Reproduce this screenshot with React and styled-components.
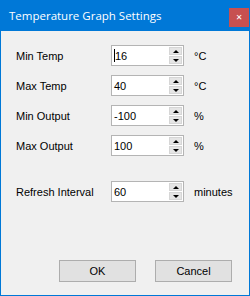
import React from "react";
import styled, { createGlobalStyle } from "styled-components";

const Global = createGlobalStyle`
	html, body {
		margin: 0;
		padding: 0;
		background: #f0f0f0;
	}
`;

const Window = styled.div`
	width: 250px;
	height: 296px;
	box-sizing: border-box;
	background: #f0f0f0;
	border: 1px solid #0078d7;
	border-top: none;
	display: flex;
	flex-direction: column;
	font-family: "Liberation Sans", Arial, sans-serif;
	font-size: 11px;
	color: #000;
`;

const TitleBar = styled.div`
	height: 31px;
	margin: 0 -1px;
	background: #0078d7;
	display: flex;
	align-items: center;
	justify-content: space-between;
	padding-left: 9px;
	padding-right: 1px;
	color: #fff;
	font-family: "Open Sans", "Noto Sans", sans-serif;
	font-size: 11.5px;
`;

const Close = styled.div`
	width: 20px;
	height: 19px;
	margin-top: 4px;
	background: #c75050;
	display: flex;
	align-items: center;
	justify-content: center;
	color: #fff;
	font-family: "DejaVu Sans", sans-serif;
	font-size: 8px;
	font-weight: bold;
`;

const Body = styled.div`
	flex: 1;
	padding: 14px 0 0 15px;
	display: flex;
	flex-direction: column;
`;

const Rows = styled.div`
	display: grid;
	grid-template-columns: 85px 73px auto;
	column-gap: 10px;
	row-gap: 9px;
	align-items: center;
	margin-top: ${(p) => p.$top || "0px"};
`;

const Label = styled.span`
	white-space: nowrap;
`;

const Spin = styled.div`
	height: 21px;
	box-sizing: border-box;
	border: 1px solid #b4b4b4;
	background: #fff;
	display: flex;
`;

const Value = styled.div`
	flex: 1;
	padding-left: 2px;
	display: flex;
	align-items: center;
`;

const Caret = styled.span`
	display: inline-block;
	width: 1px;
	height: 13px;
	background: #000;
`;

const Arrows = styled.div`
	width: 15px;
	display: flex;
	flex-direction: column;
	gap: 1px;
	padding: 1px;
	box-sizing: border-box;
	background: #fff;
`;

const Arrow = styled.div`
	flex: 1;
	background: #e5e5e5;
	border: 1px solid #d6d6d6;
	display: flex;
	align-items: center;
	justify-content: center;
	&::after {
		content: "";
		border-left: 3px solid transparent;
		border-right: 3px solid transparent;
		${(p) => (p.$down ? "border-top: 3px solid #000;" : "border-bottom: 3px solid #000;")}
	}
`;

const Unit = styled.span`
	color: #000;
`;

const Footer = styled.div`
	margin-top: auto;
	margin-bottom: 13px;
	display: flex;
	justify-content: flex-end;
	gap: 19px;
	padding-right: 17px;
`;

const Button = styled.button`
	width: 77px;
	height: 22px;
	background: #e1e1e1;
	border: 1px solid #adadad;
	font-family: "Liberation Sans", Arial, sans-serif;
	font-size: 11px;
	color: #000;
	padding: 0;
`;

function Spinner({ value, caret }) {
	return (
		<Spin>
			<Value>
				{caret && <Caret />}
				{value}
			</Value>
			<Arrows>
				<Arrow />
				<Arrow $down />
			</Arrows>
		</Spin>
	);
}

const fields = [
	{ label: "Min Temp", value: "16", unit: "°C", caret: true },
	{ label: "Max Temp", value: "40", unit: "°C" },
	{ label: "Min Output", value: "-100", unit: "%" },
	{ label: "Max Output", value: "100", unit: "%" },
];

export default function App() {
	return (
		<>
			<Global />
			<Window>
				<TitleBar>
					<span>Temperature Graph Settings</span>
					<Close>✕</Close>
				</TitleBar>
				<Body>
					<Rows>
						{fields.map((f) => (
							<React.Fragment key={f.label}>
								<Label>{f.label}</Label>
								<Spinner value={f.value} caret={f.caret} />
								<Unit>{f.unit}</Unit>
							</React.Fragment>
						))}
					</Rows>
					<Rows $top="25px">
						<Label>Refresh Interval</Label>
						<Spinner value="60" />
						<Unit>minutes</Unit>
					</Rows>
				</Body>
				<Footer>
					<Button>OK</Button>
					<Button>Cancel</Button>
				</Footer>
			</Window>
		</>
	);
}
